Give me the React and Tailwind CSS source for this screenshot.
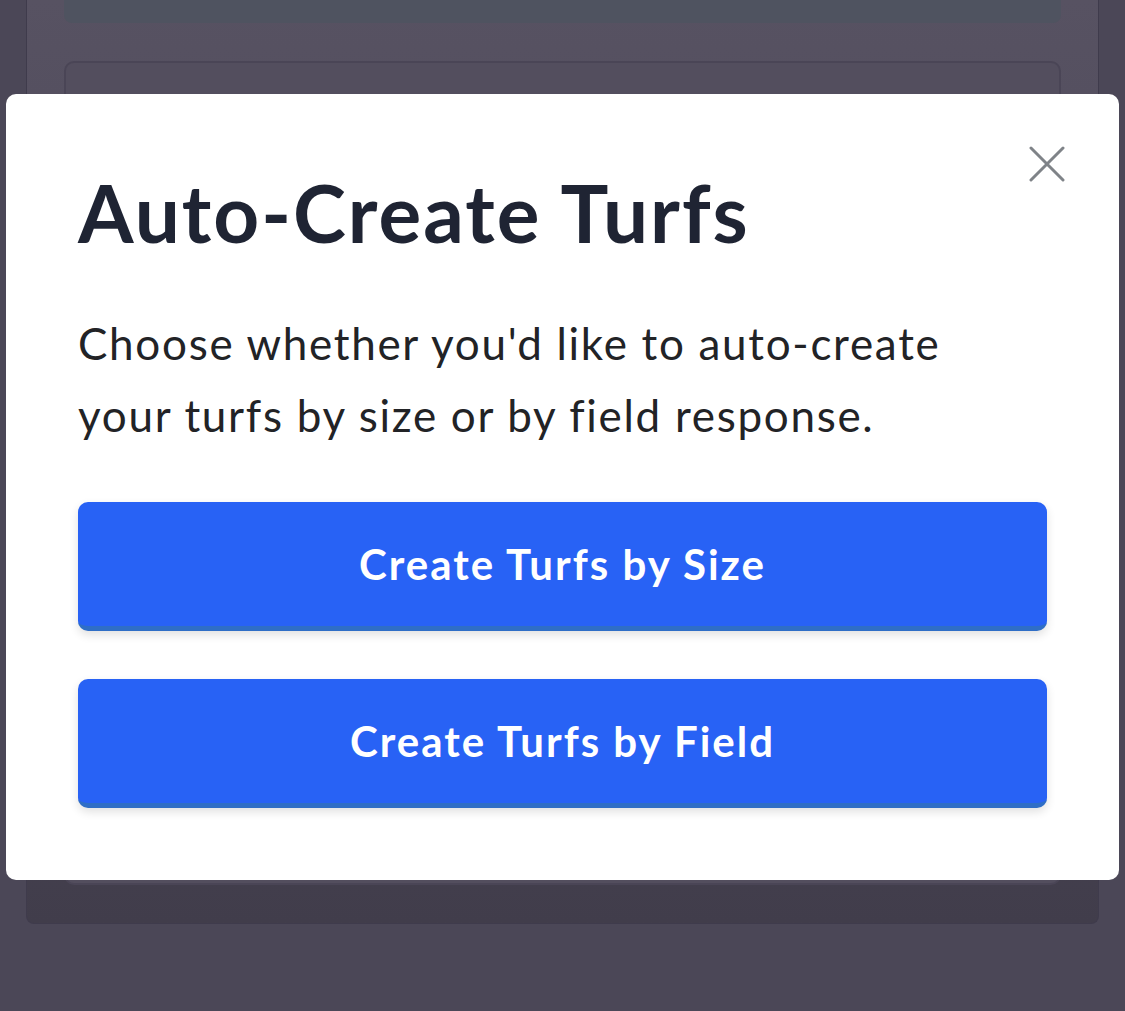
export default function App() {
  return (
    <div className="relative h-[1011px] w-[1125px] overflow-hidden bg-[#4b4757] font-['Lato','Open_Sans',sans-serif]">
      <Background />
      <Modal />
    </div>
  )
}

function Background() {
  return (
    <div className="absolute inset-0 px-[26px]">
      <div className="h-[924px] rounded-b-[8px] border-x border-b border-[#3f3b4c] bg-gradient-to-b from-[#575262] via-[#4d4859] to-[#413d4b] px-[37px]">
        <div className="h-[23px] rounded-b-[8px] bg-[#4f5360]" />
        <div className="mt-[38px] h-[824px] rounded-[10px] border-2 border-[#4a4556] bg-[#534e5e]" />
      </div>
    </div>
  )
}

function Modal() {
  return (
    <div className="absolute left-[6px] top-[94px] h-[786px] w-[1113px] rounded-[10px] bg-white px-[72px] pt-[78px]">
      <button className="absolute right-[54px] top-[52px] text-[#7f8388]">
        <svg width="36" height="36" viewBox="0 0 36 36" fill="none" stroke="currentColor" strokeWidth="3" strokeLinecap="round">
          <path d="M2 2L34 34M34 2L2 34" />
        </svg>
      </button>
      <h1 className="text-[80px] font-bold leading-[80px] tracking-[2px] text-[#1f2433]">Auto-Create Turfs</h1>
      <p className="mt-[55px] text-[44px] leading-[72px] tracking-[1.7px] text-[#222326]">
        Choose whether you'd like to auto-create<br />your turfs by size or by field response.
      </p>
      <div className="mt-[51px] flex flex-col gap-[48px]">
        <TurfButton label="Create Turfs by Size" />
        <TurfButton label="Create Turfs by Field" />
      </div>
    </div>
  )
}

function TurfButton({ label }) {
  return (
    <button className="h-[129px] w-full rounded-[10px] border-b-[5px] border-[#2f6ec6] bg-[#2862f5] text-[42px] font-bold tracking-[2px] text-white shadow-[0_4px_10px_rgba(0,0,0,0.12)]">
      {label}
    </button>
  )
}
